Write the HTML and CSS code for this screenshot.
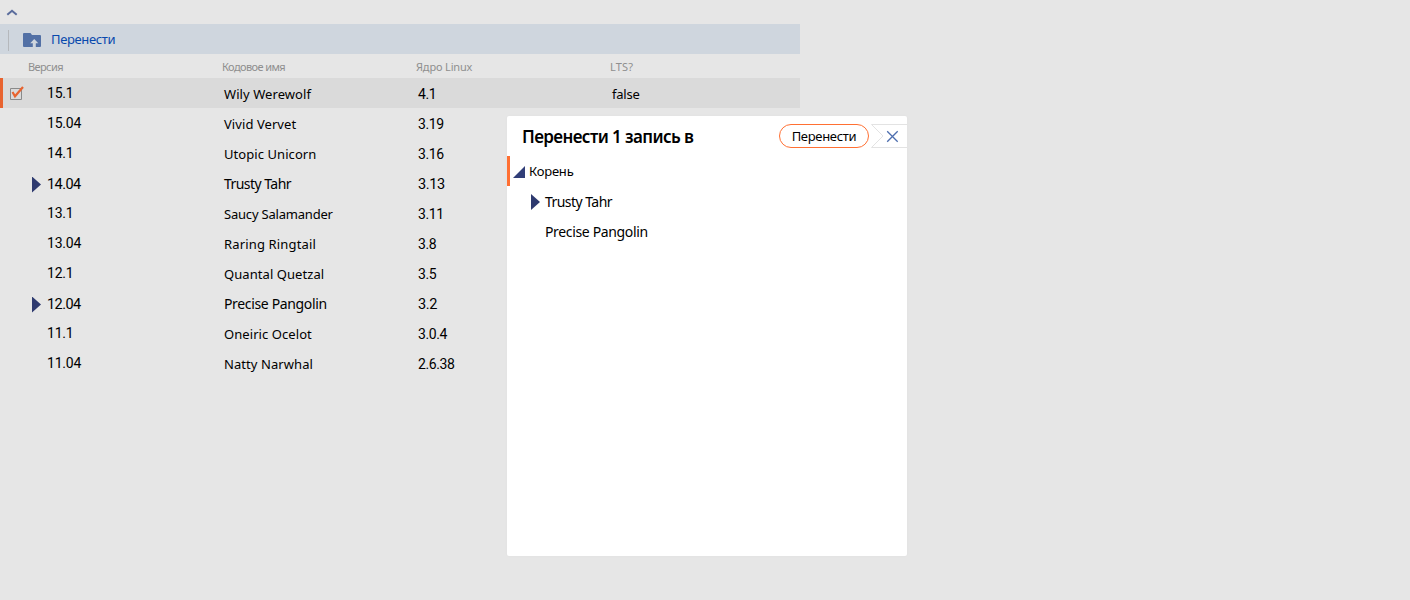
FILE: index.html
```
<!DOCTYPE html>
<html lang="ru">
<head>
<meta charset="utf-8">
<title>Перенести</title>
<link rel="stylesheet" href="styles.css">
</head>
<body>
<main class="page">
  <div class="collapse"><svg width="12" height="7" viewBox="0 0 12 7"><path d="M1.3 5.8 6 1.8 10.7 5.8" fill="none" stroke="#5a6c9c" stroke-width="2"/></svg></div>
  <div class="toolbar">
    <span class="divider"></span>
    <svg class="folder" width="18" height="14" viewBox="0 0 18 14"><path d="M0 1Q0 0 1 0H7.5L9 2H17Q18 2 18 3V13Q18 14 17 14H1Q0 14 0 13Z" fill="#5270a5"/><path d="M11.2 6 15.3 10.2H12.8V14H9.8V10.2H7.2Z" fill="#cfd6de"/></svg>
    <span class="toolbar-label">Перенести</span>
  </div>
  <div class="table">
    <div class="head"><span class="tight">Версия</span><span class="tight">Кодовое имя</span><span>Ядро Linux</span><span class="wide">LTS?</span></div>
    <div class="row selected">
      <span class="version"><svg class="check" width="15" height="15" viewBox="0 0 15 15"><path d="M.5 2.5H11.5V13.5H.5Z" fill="none" stroke="#8a8a8a"/><path d="M2.5 6 5 10.3 13 1" fill="none" stroke="#e8632f" stroke-width="2.2"/></svg>15.1</span>
      <span class="name">Wily Werewolf</span><span class="num">4.1</span><span class="name snug">false</span>
    </div>
    <div class="row"><span class="version">15.04</span><span class="name">Vivid Vervet</span><span class="num">3.19</span></div>
    <div class="row"><span class="version">14.1</span><span class="name">Utopic Unicorn</span><span class="num">3.16</span></div>
    <div class="row node"><span class="version"><i class="arrow"></i>14.04</span><span class="name">Trusty Tahr</span><span class="num">3.13</span></div>
    <div class="row"><span class="version">13.1</span><span class="name snug">Saucy Salamander</span><span class="num">3.11</span></div>
    <div class="row"><span class="version">13.04</span><span class="name loose">Raring Ringtail</span><span class="num">3.8</span></div>
    <div class="row"><span class="version">12.1</span><span class="name">Quantal Quetzal</span><span class="num">3.5</span></div>
    <div class="row node"><span class="version"><i class="arrow"></i>12.04</span><span class="name long">Precise Pangolin</span><span class="num">3.2</span></div>
    <div class="row"><span class="version">11.1</span><span class="name">Oneiric Ocelot</span><span class="num">3.0.4</span></div>
    <div class="row"><span class="version">11.04</span><span class="name">Natty Narwhal</span><span class="num">2.6.38</span></div>
  </div>
</main>
<section class="dialog">
  <header class="dialog-head">
    <h2>Перенести 1 запись в</h2>
    <button class="move">Перенести</button>
    <svg class="close" width="36" height="24" viewBox="0 0 36 24"><path d="M36 .5H.5L12 12 .5 23.5H36" fill="none" stroke="#e3e3e3"/><path d="M16.2 7.2 26.7 17.7M26.7 7.2 16.2 17.7" stroke="#4d6eaf" stroke-width="1.3"/></svg>
  </header>
  <div class="tree-row root"><svg class="open" width="12" height="12" viewBox="0 0 12 12"><path d="M0 12 12 0V12Z" fill="#313e78"/></svg><span>Корень</span></div>
  <div class="tree-row child"><i class="arrow"></i><span>Trusty Tahr</span></div>
  <div class="tree-row child leaf"><span>Precise Pangolin</span></div>
</section>
</body>
</html>
```
FILE: styles.css
```
body { margin: 0; width: 1410px; height: 600px; overflow: hidden; background: #e6e6e6; color: #000; font-family: "Noto Sans", sans-serif; }
svg { display: block; flex: none; }
.page { width: 800px; }
.collapse { height: 24px; padding: 9px 0 0 6px; box-sizing: border-box; }
.toolbar { height: 30px; background: #cfd6de; display: flex; align-items: center; }
.divider { width: 1px; height: 21px; margin: 2px 14px 0 8px; background: #b5b8bc; }
.folder { margin-top: 1px; }
.toolbar-label { margin-left: 10px; font-size: 13px; color: #0849ad; letter-spacing: -.35px; }
.head { height: 24px; display: grid; grid-template-columns: repeat(4, 194px); padding-left: 28px; box-sizing: border-box; align-items: center; font-size: 11px; line-height: 24px; color: #8f8f8f; padding-top: 1px; letter-spacing: -.15px; }
.head .tight { letter-spacing: -.6px; }
.head .wide { letter-spacing: .2px; }
.row { height: 30px; display: grid; grid-template-columns: 224px 194px 194px 188px; line-height: 30px; }
.row > span { white-space: nowrap; }
.selected { background: #dadada; box-shadow: inset 3px 0 #e8632f; }
.version { display: flex; align-items: center; justify-content: flex-start; height: 29px; padding: 1px 0 0 47px; font: 14px/29px Roboto, sans-serif; letter-spacing: -.2px; }
.selected .version { padding-left: 10px; }
.check { margin-right: 22px; }
.name { font-size: 13px; letter-spacing: .07px; padding-top: 1px; }
.snug { letter-spacing: -.2px; }
.loose { letter-spacing: .15px; }
.num { font: 14px/30px Roboto, sans-serif; letter-spacing: -.4px; padding-top: 1px; }
.node .version { height: 31px; padding: 1px 0 0 32px; font-size: 14.5px; line-height: 31px; letter-spacing: -.55px; }
.node .name { font-size: 14px; letter-spacing: -.55px; }
.node .long { letter-spacing: -.35px; }
.node .num { font-size: 14.5px; padding-top: 2px; }
.arrow { width: 9px; height: 16px; background: #2e3a6f; clip-path: polygon(0 0, 100% 50%, 0 100%); flex: none; }
.node .arrow { margin-right: 6px; }
.dialog { position: absolute; left: 507px; top: 116px; width: 400px; height: 440px; background: #fff; border-radius: 2px; box-shadow: 0 0 3px rgba(0,0,0,.03); }
.dialog-head { height: 40px; display: flex; align-items: center; }
.dialog h2 { margin: 2px 0 0 15px; flex: 1; font-size: 17px; line-height: 24px; font-weight: 600; letter-spacing: -.6px; white-space: nowrap; }
.move { width: 90px; height: 24px; padding: 0; border: 1px solid #ff7033; border-radius: 12px; background: #fff; color: #000; font: 13px/20px "Noto Sans", sans-serif; letter-spacing: -.3px; }
.close { margin-left: 2px; }
.tree-row { height: 30px; display: flex; align-items: center; font-size: 14px; letter-spacing: -.55px; white-space: nowrap; }
.root { box-shadow: inset 3px 0 #ff7033; padding-left: 6px; font-size: 13px; letter-spacing: -.2px; }
.open { margin: 2px 4px 0 0; }
.child { padding-left: 24px; gap: 5px; }
.child .arrow { margin-top: 2px; }
.leaf { padding-left: 38px; letter-spacing: -.35px; }
```
